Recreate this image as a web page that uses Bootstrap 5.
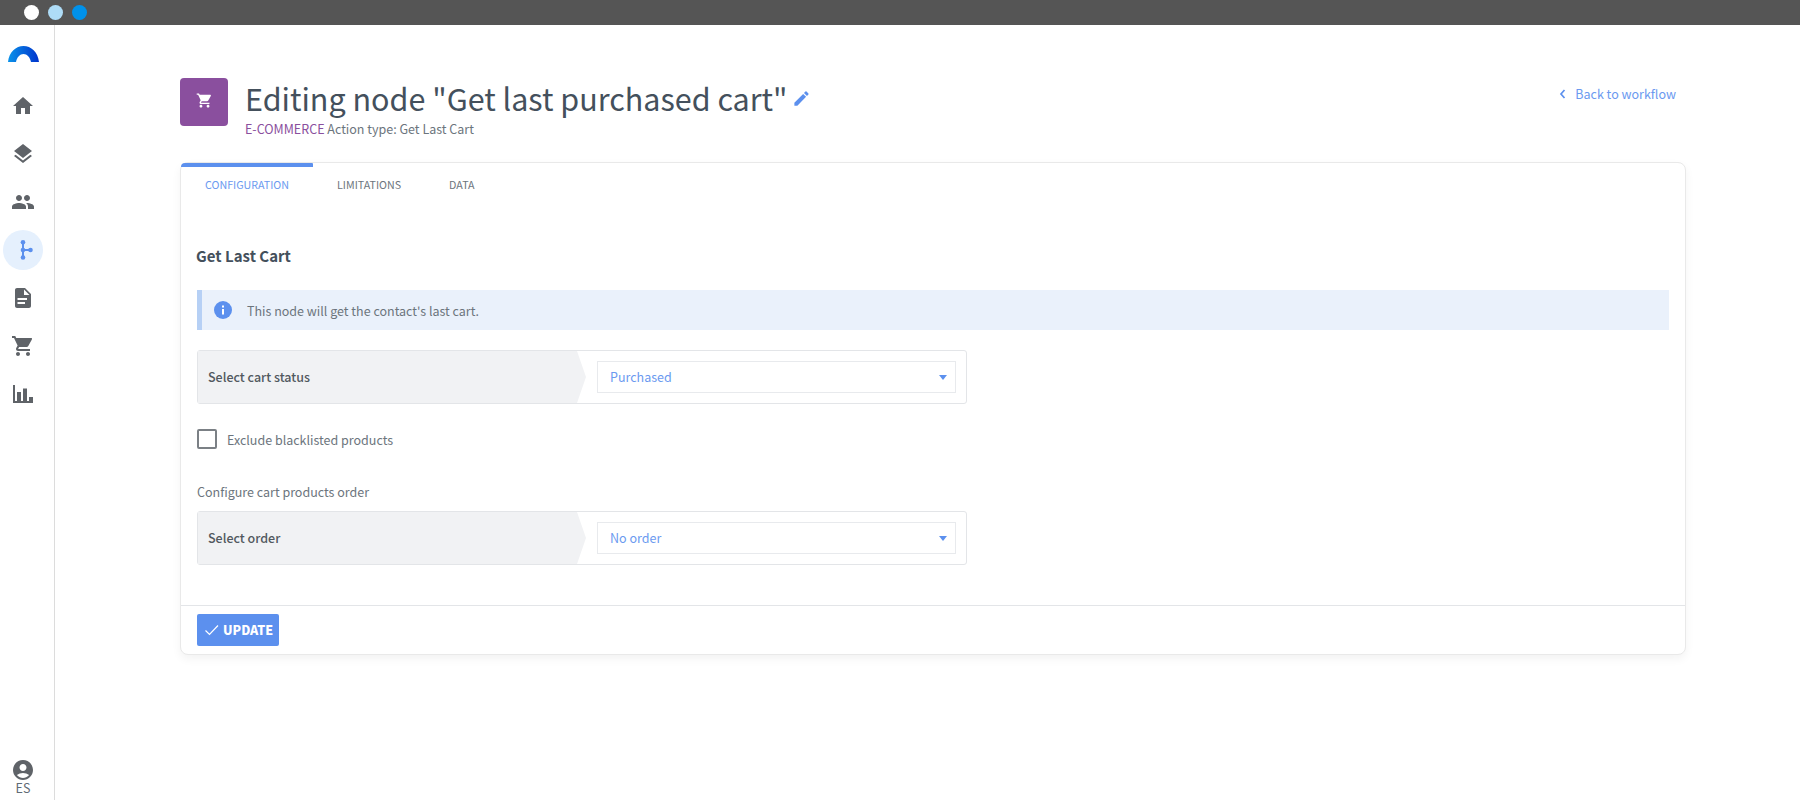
<!DOCTYPE html>
<html lang="en">
<head>
<meta charset="utf-8">
<title>Editing node</title>
<link href="https://cdn.jsdelivr.net/npm/bootstrap@5.3.0/dist/css/bootstrap.min.css" rel="stylesheet">
<style>
html,body{height:100%;}
body{font-family:"Noto Sans CJK JP","Noto Sans",sans-serif;color:#6c757d;background:#fff;font-size:12.5px;overflow:hidden;}
.topstrip{height:25px;background:#555;padding-left:24px;gap:9px;}
.dot{width:15px;height:15px;border-radius:50%;margin-top:5px;}
.dot-a{background:#fff}.dot-b{background:#aedcf7}.dot-c{background:#0091ea}
.shell{height:775px;}
.sidebar{width:55px;border-right:1px solid #dcdcdc;flex:none;}
.brand{height:20px;margin-top:21px;margin-bottom:20px;padding-left:8px;}
.side-icon{width:40px;height:40px;margin-bottom:8px;margin-left:3px;border-radius:50%;}
.side-icon.active{background:#e5f0fd;}
.side-foot{margin-top:auto;padding-bottom:6px;padding-right:8px;font-size:12.5px;line-height:12px;color:#5f6b76;}
.page{padding:53px 114px 0 125px;}
.node-icon{width:48px;height:48px;background:#8a4f9e;border-radius:4px;flex:none;padding-bottom:4px;}
.head-text{margin-left:17px;}
.page-title{font-size:30.5px;font-weight:400;color:#44505c;line-height:40px;margin:0;}
.pencil{margin-left:4px;}
.sub-line{font-size:12.5px;line-height:18px;color:#6c757d;margin-top:2px;}
.cat{color:#8a4f9e;}
.back{color:#6b9af0;text-decoration:none;font-size:12.5px;margin-top:7px;margin-right:10px;}
.head-row{height:84px;}
.main-card{border:1px solid #e9e9e9;border-radius:8px;box-shadow:0 4px 10px rgba(0,0,0,.05);height:493px;}
.tabbar{position:relative;height:39px;}
.tab-mark{position:absolute;left:0;top:0;width:132px;height:4px;background:#5c90ee;border-radius:8px 2px 0 0;}
.tab-link{font-size:10.7px;color:#6c757d;text-decoration:none;padding-top:14px;line-height:16px;}
.tab-link.on{color:#6b9af0;}
.tab-wrap{padding-left:24px;gap:48px;}
.form-area{padding:0 16px;height:403px;}
.sec-title{font-size:15px;font-weight:700;color:#44505c;margin:0 0 0 -1px;padding-top:41px;line-height:26px;height:88px;}
.note{height:40px;background:#eaf1fb;border-left:5px solid #b6d0f5;padding-left:12px;gap:15px;color:#6c757d;margin-bottom:20px;}
.nudge{padding-top:2px;}
.pick{width:770px;height:54px;border:1px solid #e3e5e8;border-radius:3px;}
.pick-label{width:388px;background:#f1f2f4;clip-path:polygon(0 0,379px 0,100% 50%,379px 100%,0 100%);padding-left:10px;font-weight:500;color:#52595f;flex:none;}
.pick-field{margin-left:11px;width:359px;height:32px;border:1px solid #e8eaed;color:#6b9af0;padding:0 8px 0 12px;}
.caret{width:0;height:0;border-left:4.5px solid transparent;border-right:4.5px solid transparent;border-top:5px solid #5c90ee;}
.check-row{margin-top:25px;gap:10px;height:20px;}
.box{width:20px;height:20px;border:2px solid #7b8085;border-radius:2px;}
.conf-label{margin-top:33px;margin-bottom:9px;line-height:20px;}
.card-foot{border-top:1px solid #e3e5e8;padding:8px 16px 7px;}
.btn-update{background:#5c90ee;color:#fff;font-weight:900;font-size:12.5px;width:82px;height:32px;border-radius:2px;border:0;padding:0 0 0 7px;gap:3px;}
</style>
</head>
<body>
<div class="topstrip d-flex">
  <div class="dot dot-a"></div><div class="dot dot-b"></div><div class="dot dot-c"></div>
</div>
<div class="shell d-flex">
  <nav class="sidebar d-flex flex-column">
    <div class="brand d-flex">
      <svg width="31" height="16" viewBox="0 0 31 16"><defs><linearGradient id="g" x1="0" x2="1"><stop offset="0" stop-color="#0a93ea"/><stop offset="1" stop-color="#0033cc"/></linearGradient></defs><path d="M0 16C1 6 8 0 15.500 0S30 6 31 16H23C22 11 19 8 15.500 8S9 11 8 16z" fill="url(#g)"/></svg>
    </div>
    <div class="side-icon d-flex align-items-center justify-content-center"><svg width="24" height="24" viewBox="0 0 24 24" fill="#5f6368"><path d="M10 20v-6h4v6h5v-8h3L12 3 2 12h3v8z"/></svg></div>
    <div class="side-icon d-flex align-items-center justify-content-center"><svg width="24" height="24" viewBox="0 0 24 24" fill="#5f6368"><path d="M11.990 18.540l-7.370-5.730L3 14.070l9 7 9-7-1.630-1.270zM12 16l7.360-5.730L21 9l-9-7-9 7 1.630 1.270z"/></svg></div>
    <div class="side-icon d-flex align-items-center justify-content-center"><svg width="24" height="24" viewBox="0 0 24 24" fill="#5f6368"><path d="M16 11c1.660 0 2.990-1.340 2.990-3S17.660 5 16 5s-3 1.340-3 3 1.340 3 3 3zm-8 0c1.660 0 2.990-1.340 2.990-3S9.660 5 8 5 5 6.340 5 8s1.340 3 3 3zm0 2c-2.330 0-7 1.170-7 3.500V19h14v-2.500C15 14.170 10.330 13 8 13zm8 0c-.29 0-.62.02-.97.05 1.160.84 1.970 1.970 1.970 3.450V19h6v-2.500c0-2.330-4.670-3.500-7-3.500z"/></svg></div>
    <div class="side-icon active d-flex align-items-center justify-content-center"><svg width="24" height="24" viewBox="0 0 24 24" fill="#5c90ee" stroke="#5c90ee"><path d="M12 5v14M12 12h7" stroke-width="2" fill="none"/><circle cx="12" cy="4.300" r="2.300" stroke="none"/><circle cx="12" cy="12" r="2.300" stroke="none"/><circle cx="12" cy="19.500" r="2.300" stroke="none"/><circle cx="19.500" cy="12" r="2.300" stroke="none"/></svg></div>
    <div class="side-icon d-flex align-items-center justify-content-center"><svg width="24" height="24" viewBox="0 0 24 24" fill="#5f6368"><path d="M14 2H6c-1.100 0-2 .9-2 2v16c0 1.100.9 2 2 2h12c1.100 0 2-.9 2-2V8zm2 10v2H6.500v-2zm-2 4v2H6.500v-2zm-1-7V3.500L18.500 9z"/></svg></div>
    <div class="side-icon d-flex align-items-center justify-content-center"><svg width="24" height="24" viewBox="0 0 24 24" fill="#5f6368"><path d="M7 18c-1.100 0-1.990.9-1.990 2S5.900 22 7 22s2-.9 2-2-.9-2-2-2zM1 2v2h2l3.600 7.590-1.350 2.450c-.16.280-.25.610-.25.960 0 1.100.9 2 2 2h12v-2H7.420c-.14 0-.25-.11-.25-.25l.03-.12.9-1.630h7.450c.75 0 1.410-.41 1.750-1.030l3.580-6.490A1 1 0 0 0 20 4H5.210l-.94-2zm16 16c-1.100 0-1.990.9-1.990 2s.89 2 1.990 2 2-.9 2-2-.9-2-2-2z"/></svg></div>
    <div class="side-icon d-flex align-items-center justify-content-center"><svg width="24" height="24" viewBox="0 0 24 24" fill="#5f6368"><path d="M2 3h2v16h18v2H2zM6 10h4v9H6zM12 6.500h4V19h-4zM18 15h4v4h-4z"/></svg></div>
    <div class="side-foot d-flex flex-column align-items-center">
      <svg width="24" height="24" viewBox="0 0 24 24" fill="#5f6368"><path d="M12 2C6.480 2 2 6.480 2 12s4.480 10 10 10 10-4.480 10-10S17.520 2 12 2zm0 4c1.930 0 3.500 1.570 3.500 3.500S13.930 13 12 13s-3.500-1.570-3.500-3.500S10.070 6 12 6zm0 14c-2.030 0-4.430-.82-6.140-2.880a9.950 9.950 0 0 1 12.280 0C16.430 19.180 14.030 20 12 20z"/></svg>
      <span>ES</span>
    </div>
  </nav>
  <main class="page flex-grow-1">
    <div class="head-row d-flex justify-content-between align-items-start">
      <div class="d-flex">
        <div class="node-icon d-flex align-items-center justify-content-center"><svg width="17" height="17" viewBox="0 0 24 24" fill="#fff"><path d="M7 18c-1.100 0-1.990.9-1.990 2S5.900 22 7 22s2-.9 2-2-.9-2-2-2zM1 2v2h2l3.600 7.590-1.350 2.450c-.16.280-.25.610-.25.960 0 1.100.9 2 2 2h12v-2H7.420c-.14 0-.25-.11-.25-.25l.03-.12.9-1.630h7.450c.75 0 1.410-.41 1.750-1.030l3.580-6.490A1 1 0 0 0 20 4H5.210l-.94-2zm16 16c-1.100 0-1.990.9-1.990 2s.89 2 1.990 2 2-.9 2-2-.9-2-2-2z"/></svg></div>
        <div class="head-text">
          <h1 class="page-title d-flex align-items-center">Editing node "Get last purchased cart"<svg class="pencil" width="19" height="19" viewBox="0 0 24 24" fill="#5c90ee"><path d="M3 17.250V21h3.750L17.810 9.940l-3.750-3.750zM20.710 7.040a1 1 0 0 0 0-1.410l-2.340-2.340a1 1 0 0 0-1.410 0l-1.830 1.830 3.750 3.750z"/></svg></h1>
          <div class="sub-line"><span class="cat">E-COMMERCE</span> Action type: Get Last Cart</div>
        </div>
      </div>
      <a class="back d-flex align-items-center gap-2" href="#"><svg width="8" height="10" viewBox="0 0 8 10" fill="none" stroke="#5c90ee" stroke-width="1.700"><path d="M5.500 1 2 5l3.500 4"/></svg>Back to workflow</a>
    </div>
    <div class="main-card card">
      <div class="tabbar">
        <div class="tab-mark"></div>
        <div class="tab-wrap d-flex">
          <a class="tab-link on" href="#">CONFIGURATION</a>
          <a class="tab-link" href="#">LIMITATIONS</a>
          <a class="tab-link" href="#">DATA</a>
        </div>
      </div>
      <div class="form-area">
        <h2 class="sec-title">Get Last Cart</h2>
        <div class="note d-flex align-items-center">
          <svg width="18" height="18" viewBox="0 0 18 18"><circle cx="9" cy="9" r="9" fill="#5c90ee"/><rect x="8" y="8" width="2" height="5.500" fill="#fff"/><rect x="8" y="4.500" width="2" height="2" fill="#fff"/></svg>
          <span class="nudge">This node will get the contact's last cart.</span>
        </div>
        <div class="pick d-flex align-items-center">
          <div class="pick-label h-100 d-flex align-items-center">Select cart status</div>
          <div class="pick-field d-flex align-items-center justify-content-between"><span>Purchased</span><span class="caret"></span></div>
        </div>
        <div class="check-row d-flex align-items-center">
          <span class="box"></span><span class="nudge">Exclude blacklisted products</span>
        </div>
        <div class="conf-label">Configure cart products order</div>
        <div class="pick d-flex align-items-center">
          <div class="pick-label h-100 d-flex align-items-center">Select order</div>
          <div class="pick-field d-flex align-items-center justify-content-between"><span>No order</span><span class="caret"></span></div>
        </div>
      </div>
      <div class="card-foot">
        <button class="btn btn-update d-flex align-items-center" type="button"><svg width="16" height="16" viewBox="0 0 16 16" fill="none" stroke="#fff" stroke-width="1.200"><path d="M1.500 8.500 5.500 12.500 14 3.500"/></svg>UPDATE</button>
      </div>
    </div>
  </main>
</div>
<script src="https://cdn.jsdelivr.net/npm/bootstrap@5.3.0/dist/js/bootstrap.bundle.min.js"></script>
</body>
</html>
